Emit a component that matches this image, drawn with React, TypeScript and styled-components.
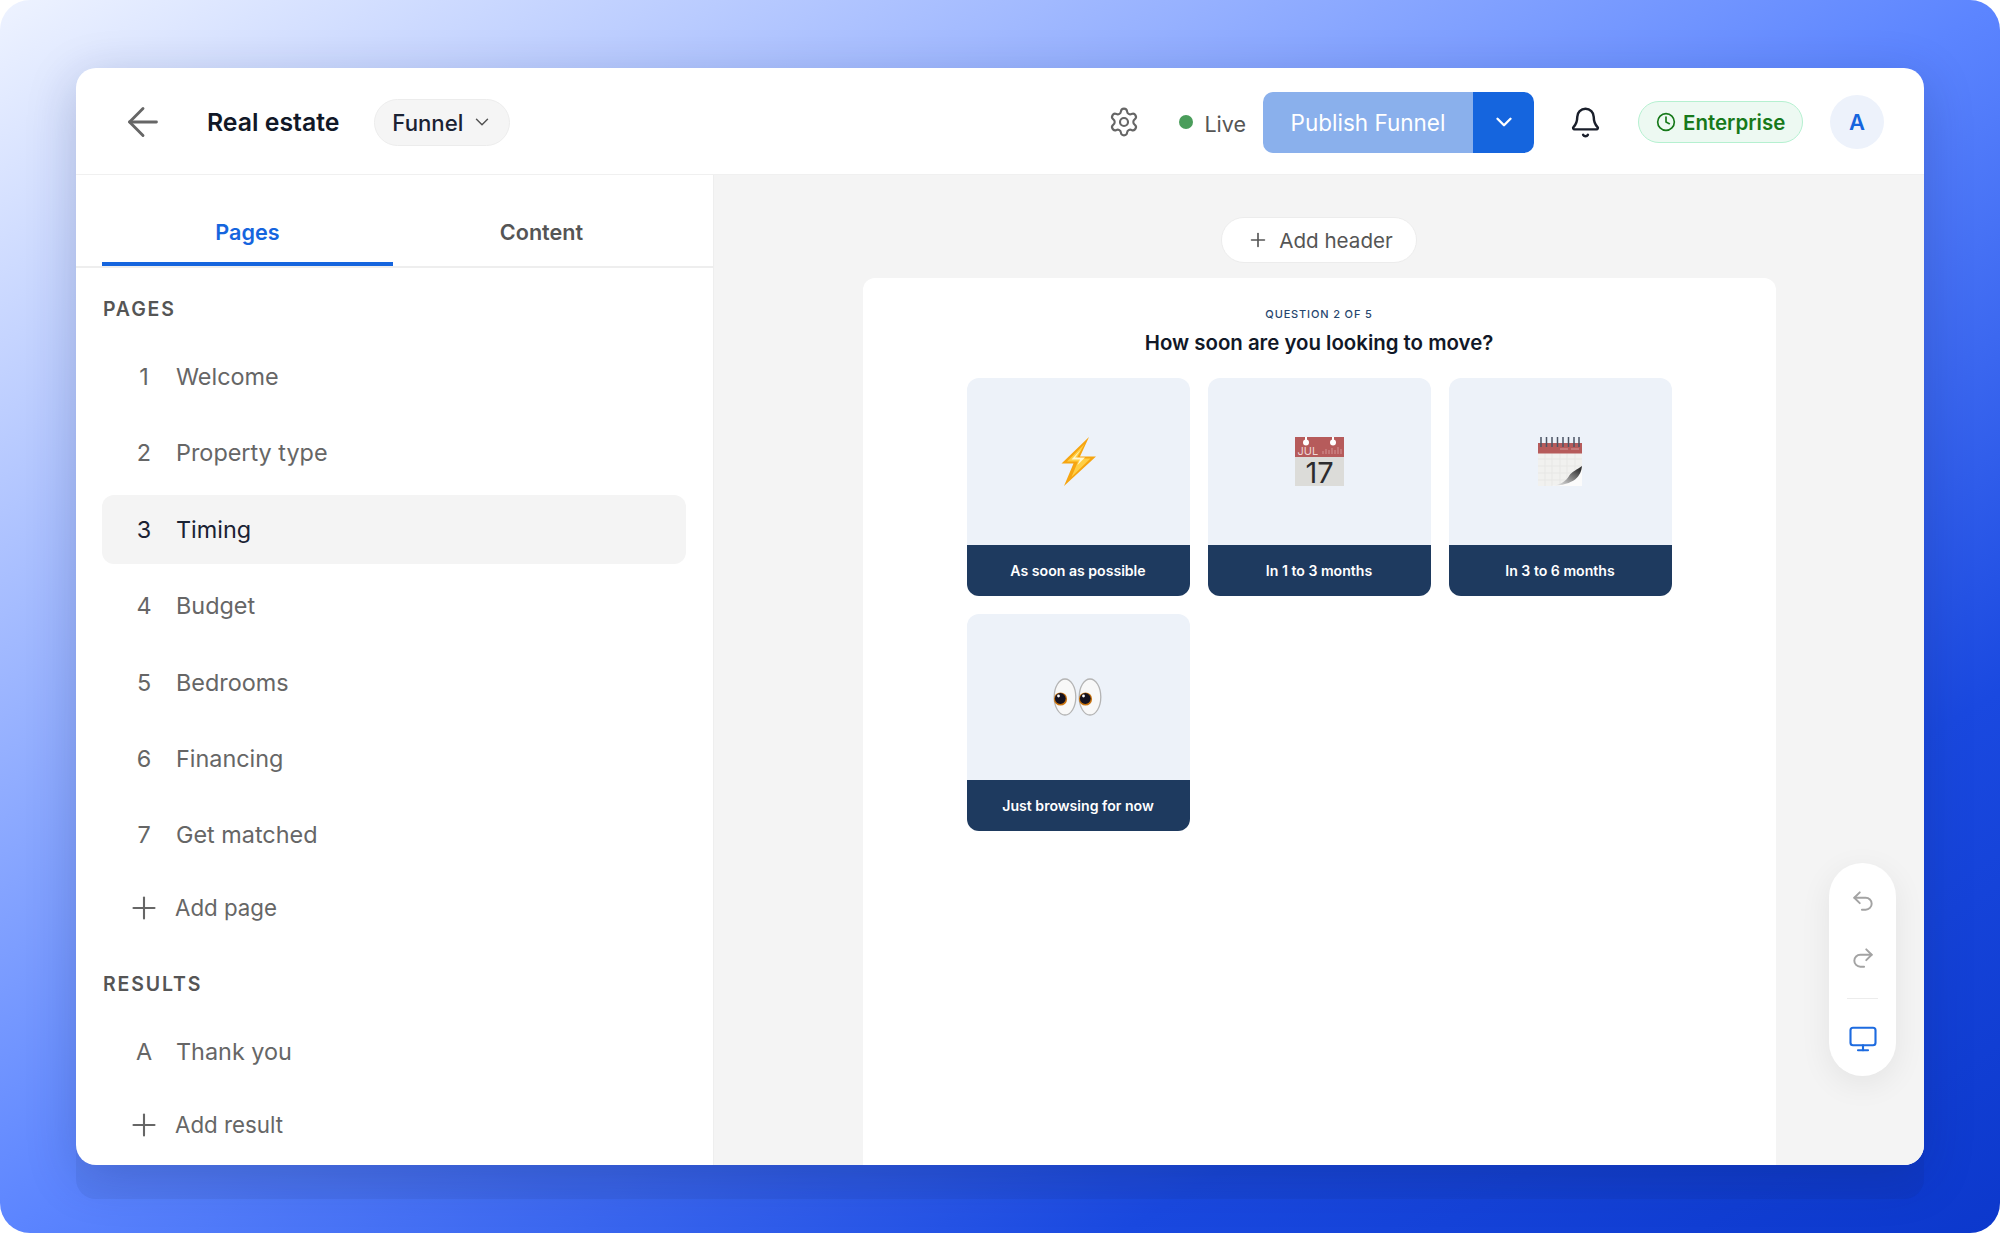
import React from "react";
import styled, { createGlobalStyle } from "styled-components";
import {
  ArrowLeft,
  Bell,
  ChevronDown,
  Clock,
  Monitor,
  Plus,
  Redo2,
  Settings,
  Undo2,
} from "lucide-react";

const GlobalStyle = createGlobalStyle`
  html, body {
    margin: 0;
    padding: 0;
    background: #ffffff;
  }
  body {
    font-family: Inter, "Liberation Sans", sans-serif;
    -webkit-font-smoothing: antialiased;
  }
`;

const Page = styled.div`
  width: 2000px;
  height: 1233px;
  box-sizing: border-box;
  padding: 68px 76px;
  border-radius: 30px;
  overflow: hidden;
  background: linear-gradient(
    to bottom right,
    #eef3ff 0%,
    #5c85ff 50%,
    #1a49e0 78%,
    #0c38cc 100%
  );
`;

const Window = styled.div`
  position: relative;
  display: flex;
  flex-direction: column;
  width: 1848px;
  height: 1097px;
  border-radius: 20px;
  overflow: hidden;
  background: #ffffff;
  box-shadow: 0 34px 0 rgba(10, 30, 90, 0.07), 0 12px 50px rgba(15, 30, 90, 0.22);
`;

const Header = styled.header`
  flex: none;
  display: flex;
  align-items: center;
  height: 107px;
  box-sizing: border-box;
  padding: 2px 40px 0 44px;
  border-bottom: 1px solid #f0f0f0;
`;

const BackIcon = styled(ArrowLeft)`
  flex: none;
  color: #666666;
  margin-right: 41px;
`;

const Title = styled.h1`
  margin: 0 35px 0 0;
  font-size: 24.8px;
  font-weight: 600;
  color: #111827;
`;

const TypePill = styled.button`
  display: flex;
  align-items: center;
  gap: 8px;
  height: 47px;
  box-sizing: border-box;
  padding: 0 16px 0 17px;
  border: 1px solid #ececec;
  border-radius: 24px;
  background: #f5f5f5;
  color: #1a2233;
  font: 500 22.2px Inter, sans-serif;
`;

const HeaderRight = styled.div`
  margin-left: auto;
  display: flex;
  align-items: center;
`;

const GearIcon = styled(Settings)`
  color: #666666;
  margin-right: 39px;
`;

const LiveDot = styled.span`
  width: 14px;
  height: 14px;
  border-radius: 50%;
  background: #4a9d5b;
  margin-right: 11.5px;
`;

const LiveText = styled.span`
  margin: 4px 17px 0 0;
  font-size: 21.5px;
  color: #555555;
`;

const PublishGroup = styled.div`
  display: flex;
  height: 61px;
  border-radius: 10px;
  overflow: hidden;
  margin-right: 35px;
`;

const PublishButton = styled.button`
  width: 210px;
  border: 0;
  background: #8ab0ec;
  color: #ffffff;
  font: 400 22.5px Inter, sans-serif;
`;

const PublishMenu = styled.button`
  display: flex;
  align-items: center;
  justify-content: center;
  width: 61px;
  border: 0;
  background: #1565de;
  color: #ffffff;
`;

const BellIcon = styled(Bell)`
  color: #1a1f2b;
  margin-right: 36px;
`;

const PlanBadge = styled.div`
  display: flex;
  align-items: center;
  gap: 7px;
  height: 42px;
  width: 165px;
  box-sizing: border-box;
  padding-left: 17px;
  border: 1px solid #b5f0d0;
  border-radius: 21px;
  background: #edf9f2;
  color: #17791a;
  font-size: 20.5px;
  font-weight: 600;
  margin-right: 27px;
`;

const Avatar = styled.div`
  display: flex;
  align-items: center;
  justify-content: center;
  width: 54px;
  height: 54px;
  border-radius: 50%;
  background: #edf2fb;
  color: #1565de;
  font-size: 22px;
  font-weight: 600;
`;

const Body = styled.div`
  flex: 1;
  display: flex;
  min-height: 0;
`;

const Sidebar = styled.aside`
  flex: none;
  width: 638px;
  box-sizing: border-box;
  border-right: 1px solid #eeeeee;
  overflow: hidden;
`;

const Tabs = styled.div`
  display: flex;
  height: 93px;
  box-sizing: border-box;
  padding: 0 23px 0 26px;
  border-bottom: 2px solid #eeeeee;
`;

const Tab = styled.div<{ $active?: boolean; $width: number }>`
  display: flex;
  align-items: center;
  justify-content: center;
  width: ${(p) => p.$width}px;
  height: 91px;
  box-sizing: border-box;
  padding-top: 27px;
  font-size: 21.6px;
  font-weight: 600;
  color: ${(p) => (p.$active ? "#1565de" : "#555555")};
  border-bottom: 4px solid ${(p) => (p.$active ? "#1565de" : "transparent")};
`;

const SidebarContent = styled.div`
  padding: 29px 27px 0 26px;
`;

const SectionLabel = styled.div<{ $spaced?: boolean }>`
  height: 24px;
  line-height: 24px;
  margin: ${(p) => (p.$spaced ? "30px" : "0")} 0 21px;
  padding-left: 1px;
  font-size: 19.5px;
  font-weight: 600;
  letter-spacing: 1.85px;
  color: #555555;
`;

const RowList = styled.div`
  display: flex;
  flex-direction: column;
  gap: 7.4px;
`;

const Row = styled.div<{ $active?: boolean }>`
  display: flex;
  align-items: center;
  height: 69px;
  padding-left: 28px;
  border-radius: 12px;
  background: ${(p) => (p.$active ? "#f4f4f4" : "transparent")};
  color: ${(p) => (p.$active ? "#1a2233" : "#666666")};
  font-size: 23.4px;
`;

const RowIndex = styled.span`
  flex: none;
  width: 28px;
  margin-right: 18px;
  text-align: center;
`;

const AddRow = styled.div`
  display: flex;
  align-items: center;
  height: 69px;
  margin-top: 4px;
  padding-left: 24px;
  color: #666666;
  font-size: 22.3px;
`;

const AddIcon = styled(Plus)`
  flex: none;
  margin-right: 13px;
`;

const Main = styled.main`
  position: relative;
  flex: 1;
  display: flex;
  flex-direction: column;
  align-items: center;
  padding-top: 42px;
  background: #f4f4f4;
  overflow: hidden;
`;

const AddHeaderButton = styled.button`
  flex: none;
  display: flex;
  align-items: center;
  gap: 10px;
  height: 46px;
  box-sizing: border-box;
  padding: 0 23px 0 25px;
  border: 1px solid #ececec;
  border-radius: 23px;
  background: #ffffff;
  color: #555555;
  font: 400 20.6px Inter, sans-serif;
`;

const Canvas = styled.section`
  flex: none;
  width: 913px;
  height: 900px;
  margin: 15px 0 0 0;
  padding-top: 28px;
  box-sizing: border-box;
  border-radius: 12px;
  background: #ffffff;
`;

const Eyebrow = styled.div`
  height: 16px;
  line-height: 16px;
  text-align: center;
  font-size: 11px;
  font-weight: 500;
  letter-spacing: 0.85px;
  color: #27466e;
`;

const Question = styled.h2`
  margin: 6px 0 20px;
  height: 30px;
  line-height: 30px;
  text-align: center;
  font-size: 20.4px;
  font-weight: 600;
  color: #111827;
`;

const OptionGrid = styled.div`
  display: grid;
  grid-template-columns: repeat(3, 223px);
  gap: 18px;
  justify-content: center;
`;

const OptionCard = styled.div`
  display: flex;
  flex-direction: column;
  height: 217.5px;
`;

const OptionArt = styled.div`
  flex: 1;
  display: flex;
  align-items: center;
  justify-content: center;
  border-radius: 12px 12px 0 0;
  background: #edf2f9;
`;

const OptionLabel = styled.div`
  flex: none;
  height: 51px;
  line-height: 51px;
  text-align: center;
  border-radius: 0 0 12px 12px;
  background: #1e3a5f;
  color: #ffffff;
  font-size: 14.1px;
  font-weight: 600;
`;

const FloatingTools = styled.div`
  position: absolute;
  right: 28px;
  bottom: 89px;
  display: flex;
  flex-direction: column;
  align-items: center;
  width: 67px;
  height: 213px;
  border-radius: 34px;
  background: #ffffff;
  box-shadow: 0 8px 32px rgba(0, 0, 0, 0.07);
`;

const ToolIcon = styled.span<{ $active?: boolean; $top: number }>`
  display: flex;
  margin-top: ${(p) => p.$top}px;
  color: ${(p) => (p.$active ? "#1d6be0" : "#a3a3a3")};
`;

const ToolDivider = styled.div`
  width: 31px;
  height: 1px;
  margin-top: 27px;
  background: #ececec;
`;

const BoltArt = () => (
  <svg width="35" height="49" viewBox="0 0 35 49">
    <path d="M28 0 0.500 26.500H12.500L3 49 35 19.500H19z" fill="#f6a511" />
    <path d="M23.500 7 6 24.500H17L10.500 40 29.500 21.500H15.500z" fill="#ffcf45" />
    <path d="M20 12.500 10.500 22.500H19L16.500 28 24 20.500H14z" fill="#fff8d4" />
  </svg>
);

const CalendarArt = () => (
  <svg width="49" height="49" viewBox="0 0 49 49">
    <rect width="49" height="49" fill="#dcdcd9" />
    <rect width="49" height="20" fill="#b65b5b" />
    <path d="M11 0v5M38 0v5" stroke="#ffffff" strokeWidth="2" />
    <circle cx="11" cy="5.500" r="3" fill="#ffffff" />
    <circle cx="38" cy="5.500" r="3" fill="#ffffff" />
    <text x="2.500" y="17.500" fontFamily="Inter, sans-serif" fontSize="11" fill="#eed6d6">
      JUL
    </text>
    <path
      d="M28 17v-3M31 17v-5M34 17v-4M37 17v-6M40 17v-4M43 17v-7M46 17v-5"
      stroke="#cf8a8a"
      strokeWidth="1.2"
    />
    <text
      x="24.500"
      y="45.500"
      textAnchor="middle"
      fontFamily="Inter, sans-serif"
      fontSize="29"
      fill="#2c2c2e"
    >
      17
    </text>
  </svg>
);

const NotepadArt = () => (
  <svg width="44" height="49" viewBox="0 0 44 49">
    <defs>
      <linearGradient id="curl" x1="0.1" y1="1" x2="0.95" y2="0.2">
        <stop offset="0" stopColor="#f4f4f4" />
        <stop offset="0.4" stopColor="#a8a8a8" />
        <stop offset="1" stopColor="#333333" />
      </linearGradient>
    </defs>
    <rect y="6" width="44" height="43" fill="#f1f1ef" />
    <path
      d="M0 22h44M0 29h44M0 36h44M0 43h44M7 16v33M14 16v33M22 16v33M29 16v33M37 16v33"
      stroke="#e7e7e5"
      strokeWidth="1"
    />
    <rect y="6" width="44" height="10.500" fill="#b65b5b" />
    <path d="M22 12h8M33 12h8" stroke="#d49a9a" strokeWidth="1" />
    <path
      d="M3 0v10M8.500 0v10M14 0v10M19.500 0v10M25 0v10M30.500 0v10M36 0v10M41 0v10"
      stroke="#4b5464"
      strokeWidth="1.500"
    />
    <path d="M13 49c11-1 14-4 17-9 3-5 8-8 14-10v19z" fill="#fbfbfb" />
    <path d="M13 49c10-1 15-5 18-10 3-5 8-6 13-10-1 10-7 19-31 20z" fill="url(#curl)" />
  </svg>
);

const EyesArt = () => (
  <svg width="50" height="38" viewBox="0 0 50 38">
    <ellipse cx="12" cy="19" rx="10.800" ry="18" fill="#f8f8f8" stroke="#b4b4b4" strokeWidth="1.300" />
    <ellipse cx="37" cy="19" rx="10.800" ry="18" fill="#f8f8f8" stroke="#b4b4b4" strokeWidth="1.300" />
    <circle cx="7.500" cy="21" r="6.600" fill="#c9730f" />
    <circle cx="7.300" cy="20.500" r="5.400" fill="#15121f" />
    <circle cx="5.500" cy="18" r="1.400" fill="#ffffff" />
    <circle cx="32.500" cy="21" r="6.600" fill="#c9730f" />
    <circle cx="32.300" cy="20.500" r="5.400" fill="#15121f" />
    <circle cx="30.500" cy="18" r="1.400" fill="#ffffff" />
  </svg>
);

const PAGES = [
  "Welcome",
  "Property type",
  "Timing",
  "Budget",
  "Bedrooms",
  "Financing",
  "Get matched",
];

const OPTIONS = [
  { label: "As soon as possible", art: <BoltArt /> },
  { label: "In 1 to 3 months", art: <CalendarArt /> },
  { label: "In 3 to 6 months", art: <NotepadArt /> },
  { label: "Just browsing for now", art: <EyesArt /> },
];

const App: React.FC = () => (
  <Page>
    <GlobalStyle />
    <Window>
      <Header>
        <BackIcon size={46} strokeWidth={1.5} />
        <Title>Real estate</Title>
        <TypePill>
          Funnel
          <ChevronDown size={22} strokeWidth={1.6} color="#555555" />
        </TypePill>
        <HeaderRight>
          <GearIcon size={32} strokeWidth={1.6} />
          <LiveDot />
          <LiveText>Live</LiveText>
          <PublishGroup>
            <PublishButton>Publish Funnel</PublishButton>
            <PublishMenu>
              <ChevronDown size={26} strokeWidth={2.2} />
            </PublishMenu>
          </PublishGroup>
          <BellIcon size={33} strokeWidth={1.8} />
          <PlanBadge>
            <Clock size={20} strokeWidth={2} />
            Enterprise
          </PlanBadge>
          <Avatar>A</Avatar>
        </HeaderRight>
      </Header>
      <Body>
        <Sidebar>
          <Tabs>
            <Tab $active $width={291}>
              Pages
            </Tab>
            <Tab $width={297}>Content</Tab>
          </Tabs>
          <SidebarContent>
            <SectionLabel>PAGES</SectionLabel>
            <RowList>
              {PAGES.map((name, i) => (
                <Row key={name} $active={name === "Timing"}>
                  <RowIndex>{i + 1}</RowIndex>
                  {name}
                </Row>
              ))}
            </RowList>
            <AddRow>
              <AddIcon size={36} strokeWidth={1.4} />
              Add page
            </AddRow>
            <SectionLabel $spaced>RESULTS</SectionLabel>
            <Row>
              <RowIndex>A</RowIndex>
              Thank you
            </Row>
            <AddRow>
              <AddIcon size={36} strokeWidth={1.4} />
              Add result
            </AddRow>
          </SidebarContent>
        </Sidebar>
        <Main>
          <AddHeaderButton>
            <Plus size={22} strokeWidth={1.8} />
            Add header
          </AddHeaderButton>
          <Canvas>
            <Eyebrow>QUESTION 2 OF 5</Eyebrow>
            <Question>How soon are you looking to move?</Question>
            <OptionGrid>
              {OPTIONS.map((option) => (
                <OptionCard key={option.label}>
                  <OptionArt>{option.art}</OptionArt>
                  <OptionLabel>{option.label}</OptionLabel>
                </OptionCard>
              ))}
            </OptionGrid>
          </Canvas>
          <FloatingTools>
            <ToolIcon $top={25}>
              <Undo2 size={26} strokeWidth={1.8} />
            </ToolIcon>
            <ToolIcon $top={31}>
              <Redo2 size={26} strokeWidth={1.8} />
            </ToolIcon>
            <ToolDivider />
            <ToolIcon $active $top={25}>
              <Monitor size={30} strokeWidth={1.7} />
            </ToolIcon>
          </FloatingTools>
        </Main>
      </Body>
    </Window>
  </Page>
);

export default App;
